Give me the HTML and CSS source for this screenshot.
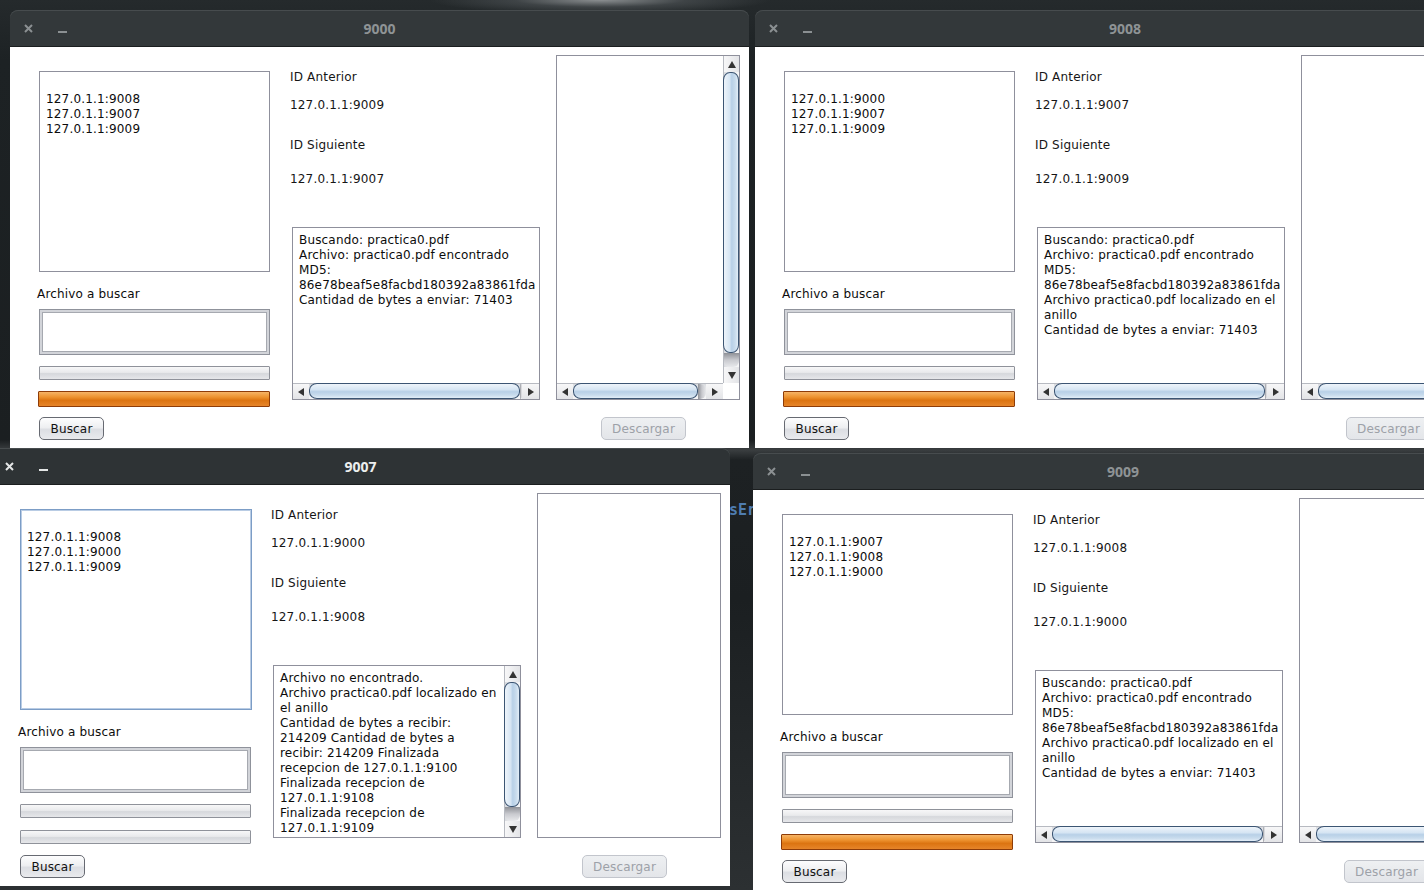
FILE: index.html
```html
<!DOCTYPE html>
<html>
<head>
<meta charset="utf-8">
<title>Nodos</title>
<link rel="stylesheet" href="styles.css">
</head>
<body>
<div class="desktop">
  <span class="bgtext">sEr</span>

  <!-- Window 9000 -->
  <div class="win win-a">
    <div class="titlebar">
      <div class="tb-btns">
        <svg class="tb-close" width="9" height="9" viewBox="0 0 9 9"><path d="M1 1L8 8M8 1L1 8"/></svg>
        <svg class="tb-min" width="9" height="2" viewBox="0 0 9 2"><rect width="9" height="2"/></svg>
      </div>
      <div class="tb-title">9000</div>
      <div></div>
    </div>
    <div class="content">
      <div class="col-left">
        <div class="listbox">
          <div class="ln">&nbsp;</div>
          <div class="ln">127.0.1.1:9008</div>
          <div class="ln">127.0.1.1:9007</div>
          <div class="ln">127.0.1.1:9009</div>
        </div>
        <div class="lbl-file">Archivo a buscar</div>
        <div class="field"></div>
        <div class="prog"></div>
        <div class="prog prog-full"></div>
        <button class="btn">Buscar</button>
      </div>
      <div class="col-mid">
        <div class="ml ml-1">ID Anterior</div>
        <div class="ml ml-2">127.0.1.1:9009</div>
        <div class="ml ml-3">ID Siguiente</div>
        <div class="ml ml-4">127.0.1.1:9007</div>
        <div class="textarea">
          <div class="ta-body">
            <div class="ln">Buscando: practica0.pdf</div>
            <div class="ln">Archivo: practica0.pdf encontrado</div>
            <div class="ln">MD5:</div>
            <div class="ln">86e78beaf5e8facbd180392a83861fda</div>
            <div class="ln">Cantidad de bytes a enviar: 71403</div>
          </div>
          <div class="hbar">
            <div class="arr"><i class="tri tri-l"></i></div>
            <div class="track"><div class="thumb-h"></div><div class="shade-h sm"></div></div>
            <div class="arr arr-r"><i class="tri tri-r"></i></div>
          </div>
        </div>
      </div>
      <div class="col-right">
        <div class="rlist">
          <div class="rl-body"></div>
          <div class="vbar">
            <div class="arr-v"><i class="tri tri-u"></i></div>
            <div class="track-v"><div class="thumb-v"></div><div class="shade-v"></div></div>
            <div class="arr-v"><i class="tri tri-d"></i></div>
          </div>
          <div class="hbar">
            <div class="arr"><i class="tri tri-l"></i></div>
            <div class="track"><div class="thumb-h"></div><div class="shade-h"></div></div>
            <div class="arr arr-r"><i class="tri tri-r"></i></div>
          </div>
          <div class="corner"></div>
        </div>
        <button class="btn btn-dis">Descargar</button>
      </div>
    </div>
  </div>

  <!-- Window 9008 -->
  <div class="win win-b">
    <div class="titlebar">
      <div class="tb-btns">
        <svg class="tb-close" width="9" height="9" viewBox="0 0 9 9"><path d="M1 1L8 8M8 1L1 8"/></svg>
        <svg class="tb-min" width="9" height="2" viewBox="0 0 9 2"><rect width="9" height="2"/></svg>
      </div>
      <div class="tb-title">9008</div>
      <div></div>
    </div>
    <div class="content">
      <div class="col-left">
        <div class="listbox">
          <div class="ln">&nbsp;</div>
          <div class="ln">127.0.1.1:9000</div>
          <div class="ln">127.0.1.1:9007</div>
          <div class="ln">127.0.1.1:9009</div>
        </div>
        <div class="lbl-file">Archivo a buscar</div>
        <div class="field"></div>
        <div class="prog"></div>
        <div class="prog prog-full"></div>
        <button class="btn">Buscar</button>
      </div>
      <div class="col-mid">
        <div class="ml ml-1">ID Anterior</div>
        <div class="ml ml-2">127.0.1.1:9007</div>
        <div class="ml ml-3">ID Siguiente</div>
        <div class="ml ml-4">127.0.1.1:9009</div>
        <div class="textarea">
          <div class="ta-body">
            <div class="ln">Buscando: practica0.pdf</div>
            <div class="ln">Archivo: practica0.pdf encontrado</div>
            <div class="ln">MD5:</div>
            <div class="ln">86e78beaf5e8facbd180392a83861fda</div>
            <div class="ln">Archivo practica0.pdf localizado en el</div>
            <div class="ln">anillo</div>
            <div class="ln">Cantidad de bytes a enviar: 71403</div>
          </div>
          <div class="hbar">
            <div class="arr"><i class="tri tri-l"></i></div>
            <div class="track"><div class="thumb-h"></div><div class="shade-h sm"></div></div>
            <div class="arr arr-r"><i class="tri tri-r"></i></div>
          </div>
        </div>
      </div>
      <div class="col-right">
        <div class="rlist">
          <div class="rl-body"></div>
          <div class="vbar">
            <div class="arr-v"><i class="tri tri-u"></i></div>
            <div class="track-v"><div class="thumb-v"></div><div class="shade-v"></div></div>
            <div class="arr-v"><i class="tri tri-d"></i></div>
          </div>
          <div class="hbar">
            <div class="arr"><i class="tri tri-l"></i></div>
            <div class="track"><div class="thumb-h"></div><div class="shade-h"></div></div>
            <div class="arr arr-r"><i class="tri tri-r"></i></div>
          </div>
          <div class="corner"></div>
        </div>
        <button class="btn btn-dis">Descargar</button>
      </div>
    </div>
  </div>

  <!-- Window 9007 (active) -->
  <div class="win win-c">
    <div class="titlebar active">
      <div class="tb-btns">
        <svg class="tb-close" width="9" height="9" viewBox="0 0 9 9"><path d="M1 1L8 8M8 1L1 8"/></svg>
        <svg class="tb-min" width="9" height="2" viewBox="0 0 9 2"><rect width="9" height="2"/></svg>
      </div>
      <div class="tb-title">9007</div>
      <div></div>
    </div>
    <div class="content">
      <div class="col-left">
        <div class="listbox focus">
          <div class="ln">&nbsp;</div>
          <div class="ln">127.0.1.1:9008</div>
          <div class="ln">127.0.1.1:9000</div>
          <div class="ln">127.0.1.1:9009</div>
        </div>
        <div class="lbl-file">Archivo a buscar</div>
        <div class="field"></div>
        <div class="prog"></div>
        <div class="prog prog-empty2"></div>
        <button class="btn">Buscar</button>
      </div>
      <div class="col-mid">
        <div class="ml ml-1">ID Anterior</div>
        <div class="ml ml-2">127.0.1.1:9000</div>
        <div class="ml ml-3">ID Siguiente</div>
        <div class="ml ml-4">127.0.1.1:9008</div>
        <div class="textarea textarea-v">
          <div class="ta-body">
            <div class="ln">Archivo no encontrado.</div>
            <div class="ln">Archivo practica0.pdf localizado en</div>
            <div class="ln">el anillo</div>
            <div class="ln">Cantidad de bytes a recibir:</div>
            <div class="ln">214209 Cantidad de bytes a</div>
            <div class="ln">recibir: 214209 Finalizada</div>
            <div class="ln">recepcion de 127.0.1.1:9100</div>
            <div class="ln">Finalizada recepcion de</div>
            <div class="ln">127.0.1.1:9108</div>
            <div class="ln">Finalizada recepcion de</div>
            <div class="ln">127.0.1.1:9109</div>
            <div class="ln">Archivo recibido y verificado</div>
          </div>
          <div class="vbar vbar-ta">
            <div class="arr-v"><i class="tri tri-u"></i></div>
            <div class="track-v"><div class="thumb-v"></div><div class="shade-v"></div></div>
            <div class="arr-v"><i class="tri tri-d"></i></div>
          </div>
        </div>
      </div>
      <div class="col-right">
        <div class="rlist rlist-plain"></div>
        <button class="btn btn-dis">Descargar</button>
      </div>
    </div>
  </div>

  <!-- Window 9009 -->
  <div class="win win-d">
    <div class="titlebar">
      <div class="tb-btns">
        <svg class="tb-close" width="9" height="9" viewBox="0 0 9 9"><path d="M1 1L8 8M8 1L1 8"/></svg>
        <svg class="tb-min" width="9" height="2" viewBox="0 0 9 2"><rect width="9" height="2"/></svg>
      </div>
      <div class="tb-title">9009</div>
      <div></div>
    </div>
    <div class="content">
      <div class="col-left">
        <div class="listbox">
          <div class="ln">&nbsp;</div>
          <div class="ln">127.0.1.1:9007</div>
          <div class="ln">127.0.1.1:9008</div>
          <div class="ln">127.0.1.1:9000</div>
        </div>
        <div class="lbl-file">Archivo a buscar</div>
        <div class="field"></div>
        <div class="prog"></div>
        <div class="prog prog-full"></div>
        <button class="btn">Buscar</button>
      </div>
      <div class="col-mid">
        <div class="ml ml-1">ID Anterior</div>
        <div class="ml ml-2">127.0.1.1:9008</div>
        <div class="ml ml-3">ID Siguiente</div>
        <div class="ml ml-4">127.0.1.1:9000</div>
        <div class="textarea">
          <div class="ta-body">
            <div class="ln">Buscando: practica0.pdf</div>
            <div class="ln">Archivo: practica0.pdf encontrado</div>
            <div class="ln">MD5:</div>
            <div class="ln">86e78beaf5e8facbd180392a83861fda</div>
            <div class="ln">Archivo practica0.pdf localizado en el</div>
            <div class="ln">anillo</div>
            <div class="ln">Cantidad de bytes a enviar: 71403</div>
          </div>
          <div class="hbar">
            <div class="arr"><i class="tri tri-l"></i></div>
            <div class="track"><div class="thumb-h"></div><div class="shade-h sm"></div></div>
            <div class="arr arr-r"><i class="tri tri-r"></i></div>
          </div>
        </div>
      </div>
      <div class="col-right">
        <div class="rlist">
          <div class="rl-body"></div>
          <div class="vbar">
            <div class="arr-v"><i class="tri tri-u"></i></div>
            <div class="track-v"><div class="thumb-v"></div><div class="shade-v"></div></div>
            <div class="arr-v"><i class="tri tri-d"></i></div>
          </div>
          <div class="hbar">
            <div class="arr"><i class="tri tri-l"></i></div>
            <div class="track"><div class="thumb-h"></div><div class="shade-h"></div></div>
            <div class="arr arr-r"><i class="tri tri-r"></i></div>
          </div>
          <div class="corner"></div>
        </div>
        <button class="btn btn-dis">Descargar</button>
      </div>
    </div>
  </div>
</div>
</body>
</html>
```

FILE: styles.css
```css
html, body {
  margin: 0;
  padding: 0;
  background: #1c2022;
}

.desktop {
  position: relative;
  width: 1424px;
  height: 890px;
  overflow: hidden;
  font-family: "DejaVu Sans", "Liberation Sans", sans-serif;
  font-size: 12px;
  letter-spacing: 0.17px;
  color: #0c0c0c;
  background:
    radial-gradient(ellipse 170px 14px at 600px 0px, #8b8f91 0%, rgba(80,85,88,0.6) 50%, rgba(30,35,37,0) 100%),
    linear-gradient(to bottom, #252a2c 0px, #1d2224 60px, #1b1f21 440px, #3a3e40 450px, #1d2123 460px, #1b1f21 600px, #2c3032 890px);
}

.bgtext {
  position: absolute;
  left: 729px;
  top: 501px;
  font-family: "DejaVu Sans Mono", monospace;
  font-weight: bold;
  font-size: 15px;
  letter-spacing: 0;
  color: #4f7db0;
  z-index: 0;
}

/* ---------- windows ---------- */
.win {
  position: absolute;
  width: 740px;
  z-index: 1;
}
.win-a { left: 10px; top: 10px; width: 739px; }
.win-b { left: 755px; top: 10px; }
.win-c { left: -9px; top: 448px; width: 739px; z-index: 3; }
.win-d { left: 753px; top: 453px; z-index: 2; }

.titlebar {
  height: 36px;
  background: #33383a;
  border-bottom: 1px solid #1b1e1f;
  border-radius: 8px 8px 0 0;
  box-shadow: inset 0 1px 0 #474c4e;
  display: grid;
  grid-template-columns: 1fr auto 1fr;
  align-items: center;
}
.titlebar.active { background: #2e3335; }

.tb-btns {
  display: flex;
  align-items: center;
  padding-left: 14px;
}
.tb-close { stroke: #8b9092; stroke-width: 2; fill: none; }
.tb-min { fill: #8b9092; margin-left: 25px; margin-top: 7px; }
.titlebar.active .tb-close { stroke: #e4e6e6; }
.titlebar.active .tb-min { fill: #e4e6e6; }

.tb-title {
  font-family: "Noto Sans", "DejaVu Sans", sans-serif;
  font-weight: 700;
  font-size: 14px;
  letter-spacing: 0;
  color: #8e9395;
}
.titlebar.active .tb-title { color: #eceeee; }

.content {
  height: 401px;
  background: #ffffff;
  display: flex;
  align-items: flex-start;
}

.ln {
  line-height: 15px;
  white-space: nowrap;
}

/* ---------- left column ---------- */
.col-left {
  margin-left: 29px;
  width: 231px;
  padding-top: 24px;
  display: flex;
  flex-direction: column;
}
.listbox {
  box-sizing: border-box;
  height: 201px;
  border: 1px solid #8f909c;
  padding: 5px 6px 4px;
  background: #fff;
}
.listbox.focus {
  border-color: #7c9dc6;
  box-shadow: inset 0 0 0 1px #b9cce4;
  margin-right: -1px;
}
.lbl-file {
  margin-top: 14px;
  margin-left: -2px;
  line-height: 15px;
  padding-top: 1px;
  margin-bottom: -1px;
}
.field {
  margin-top: 8px;
  height: 46px;
  box-sizing: border-box;
  border: 1px solid #8f929b;
  box-shadow: inset 0 0 0 2px #d2d4d9, inset 0 0 0 3px #a6a9b0;
  background: #fff;
}
.prog {
  margin-top: 11px;
  height: 14px;
  box-sizing: border-box;
  border: 1px solid #8f929a;
  border-radius: 1px;
  background: linear-gradient(to bottom, #f7f7f8 0%, #e9eaec 45%, #d6d8dc 55%, #e6e7ea 100%);
}
.prog-full {
  height: 16px;
  width: 232px;
  margin-left: -1px;
  border-color: #8e3c08;
  background: linear-gradient(to bottom, #f6b466 0%, #ee9431 35%, #dc7411 60%, #e6852a 100%);
}
.prog-empty2 {
  margin-top: 12px;
  height: 14px;
}

.btn {
  margin-top: 10px;
  height: 23px;
  width: 65px;
  padding: 0;
  border: 1px solid #676a72;
  border-radius: 5px;
  background: linear-gradient(to bottom, #fdfdfe 0%, #eeeff1 45%, #dcdee3 55%, #e9eaed 100%);
  font-family: "DejaVu Sans", sans-serif;
  font-size: 12px;
  letter-spacing: 0.17px;
  color: #111;
  text-align: center;
}
.btn-dis {
  width: 85px;
  margin-top: 17px;
  margin-left: 45px;
  border-color: #c2c5cc;
  background: linear-gradient(to bottom, #eef0f2 0%, #e3e5e9 100%);
  color: #9da1a8;
}
.prog-empty2 + .btn { margin-top: 11px; }

/* ---------- middle column ---------- */
.col-mid {
  margin-left: 20px;
  width: 250px;
  padding-top: 23px;
  display: flex;
  flex-direction: column;
}
.ml { line-height: 15px; color: #161616; }
.ml-2 { margin-top: 13px; }
.ml-3 { margin-top: 25px; }
.ml-4 { margin-top: 19px; }

.textarea {
  margin-top: 40px;
  margin-left: 2px;
  width: 248px;
  height: 173px;
  box-sizing: border-box;
  border: 1px solid #8f909c;
  display: flex;
  flex-direction: column;
  background: #fff;
}
.textarea-v { flex-direction: row; }
.ta-body {
  flex: 1;
  min-width: 0;
  min-height: 0;
  overflow: hidden;
  padding: 5px 6px 0 6px;
}

/* ---------- right column ---------- */
.col-right {
  margin-left: 16px;
  width: 184px;
  padding-top: 8px;
  display: flex;
  flex-direction: column;
}
.rlist {
  height: 345px;
  box-sizing: border-box;
  border: 1px solid #8f909c;
  display: grid;
  grid-template-columns: 1fr 16px;
  grid-template-rows: 1fr 16px;
  background: #fff;
}
.rlist-plain { display: block; }
.corner { background: #fff; }

/* ---------- scrollbars ---------- */
.hbar {
  height: 16px;
  display: flex;
  box-sizing: border-box;
  border-top: 1px solid #b7bac1;
  background: linear-gradient(to bottom, #d9dbdf 0%, #eeeff1 40%, #f6f6f7 100%);
}
.arr {
  width: 16px;
  flex: none;
  display: flex;
  align-items: center;
  justify-content: center;
  background: linear-gradient(to bottom, #f7f7f8, #e3e4e7);
}
.arr-r { width: 17px; }
.track {
  flex: 1;
  display: flex;
  min-width: 0;
}
.thumb-h {
  flex: 1;
  box-sizing: border-box;
  border: 1px solid #3c5573;
  border-radius: 8px / 7px;
  margin-top: -1px;
  background: linear-gradient(to bottom, #eef4fa 0%, #d6e5f3 40%, #b8d0e7 55%, #c9dced 80%, #e3eef8 100%);
}
.shade-h {
  width: 8px;
  flex: none;
  background: linear-gradient(to right, #8f9197 0%, #c9cacf 50%, #e7e8eb 100%);
  border-radius: 0 6px 6px 0;
}
.shade-h.sm { width: 2px; }

.vbar {
  display: flex;
  flex-direction: column;
  box-sizing: border-box;
  border-left: 1px solid #b7bac1;
  background: linear-gradient(to right, #d9dbdf 0%, #eeeff1 40%, #f6f6f7 100%);
}
.vbar-ta { width: 16px; flex: none; }
.arr-v {
  height: 16px;
  flex: none;
  display: flex;
  align-items: center;
  justify-content: center;
  background: linear-gradient(to right, #f7f7f8, #e3e4e7);
}
.track-v {
  flex: 1;
  display: flex;
  flex-direction: column;
  min-height: 0;
}
.thumb-v {
  flex: 1;
  box-sizing: border-box;
  border: 1px solid #3c5573;
  border-radius: 7px / 8px;
  margin-left: -1px;
  background: linear-gradient(to right, #eef4fa 0%, #d6e5f3 40%, #b8d0e7 55%, #c9dced 80%, #e3eef8 100%);
}
.shade-v {
  height: 14px;
  flex: none;
  background: linear-gradient(to bottom, #8f9197 0%, #c9cacf 50%, #e7e8eb 100%);
  border-radius: 0 0 6px 6px;
}

.tri {
  display: block;
  width: 0;
  height: 0;
}
.tri-l { border-top: 4px solid transparent; border-bottom: 4px solid transparent; border-right: 6px solid #333; }
.tri-r { border-top: 4px solid transparent; border-bottom: 4px solid transparent; border-left: 6px solid #333; }
.tri-u { border-left: 4px solid transparent; border-right: 4px solid transparent; border-bottom: 7px solid #333; }
.tri-d { border-left: 4px solid transparent; border-right: 4px solid transparent; border-top: 7px solid #333; }
```
